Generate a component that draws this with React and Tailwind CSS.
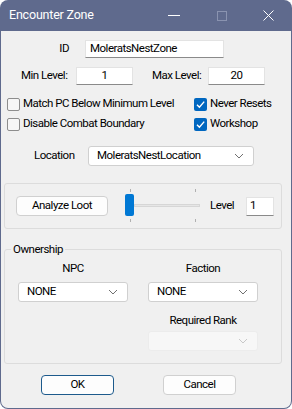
import React from 'react';

const font = { fontFamily: 'Roboto, "Liberation Sans", sans-serif' };

const Chevron = ({ color = '#606060' }) => (
    <svg width="10" height="6" viewBox="0 0 10 6" fill="none">
        <path d="M1 1 L5 5 L9 1" stroke={color} strokeWidth="1" />
    </svg>
);

const TextBox = ({ value, className = '' }) => (
    <div className={`h-[18px] bg-white border border-[#e3e3e3] border-b-[#8a8a8a] flex items-center ${className}`}>
        {value}
    </div>
);

const Combo = ({ value, disabled, className = '' }) => (
    <div
        className={`h-[20px] rounded-[3px] border flex items-center justify-between pl-[8px] pr-[9px] ${
            disabled ? 'bg-[#f7f7f7] border-[#ececec]' : 'bg-white border-[#d0d0d0]'
        } ${className}`}
    >
        <span>{value}</span>
        <Chevron color={disabled ? '#c8c8c8' : '#707070'} />
    </div>
);

const CheckBox = ({ checked, label }) => (
    <div className="flex items-center h-[14px] gap-[3px] whitespace-nowrap">
        {checked ? (
            <div className="w-[13px] h-[13px] rounded-[2px] bg-[#0067c0] flex items-center justify-center shrink-0">
                <svg width="11" height="11" viewBox="0 0 11 11" fill="none">
                    <path d="M2 5.8 L4.4 8.2 L9.2 2.6" stroke="white" strokeWidth="1.4" />
                </svg>
            </div>
        ) : (
            <div className="w-[13px] h-[13px] rounded-[2px] border border-[#8d8d8d] bg-[#f6f6f6] shrink-0" />
        )}
        <span>{label}</span>
    </div>
);

const Button = ({ children, primary, className = '' }) => (
    <div
        className={`h-[20px] rounded-[4px] flex items-center justify-center bg-[#fdfdfd] border ${
            primary ? 'border-[#1d5a8c]' : 'border-[#d0d0d0]'
        } ${className}`}
    >
        {children}
    </div>
);

const Slider = () => (
    <div className="relative ml-[13px] w-[84px] h-[34px] shrink-0">
        <div className="absolute left-[13px] top-[15px] w-[66px] h-[3px] bg-[#e6e6e6] border border-[#d6d6d6]" />
        <div className="absolute left-[9px] top-0 w-px h-[3px] bg-[#b0b0b0]" />
        <div className="absolute left-[74px] top-0 w-px h-[3px] bg-[#b0b0b0]" />
        <div className="absolute left-[9px] top-[30px] w-px h-[3px] bg-[#b0b0b0]" />
        <div className="absolute left-[74px] top-[30px] w-px h-[3px] bg-[#b0b0b0]" />
        <div className="absolute left-[4px] top-[5px] w-[9px] h-[22px] rounded-[2px] bg-[#0078d4]" />
    </div>
);

const App = () => {
    return (
        <div className="w-[292px] h-[409px] bg-white text-[11.5px] tracking-[-0.5px] text-black whitespace-nowrap" style={font}>
            <div className="w-[292px] h-[409px] rounded-[8px] overflow-hidden bg-[#5f6a8d] flex flex-col">
                {/* title bar */}
                <div className="h-[31px] flex items-center text-white shrink-0">
                    <span className="ml-[9px] text-[12.5px] tracking-[-0.2px]">Encounter Zone</span>
                    <div className="ml-auto flex items-center">
                        <div className="w-[12px] h-px bg-white mr-[37px]" />
                        <div className="w-[10px] h-[10px] border border-[#8a93b0] mr-[36px]" />
                        <svg width="11" height="11" viewBox="0 0 11 11" className="mr-[18px]">
                            <path d="M0.5 0.5 L10.5 10.5 M10.5 0.5 L0.5 10.5" stroke="white" strokeWidth="1" />
                        </svg>
                    </div>
                </div>

                {/* client */}
                <div className="flex-1 mx-px mb-px rounded-b-[7px] bg-[#f0f0f0] flex flex-col">
                    <div className="flex items-center mt-[9px] h-[18px]">
                        <span className="w-[68px] text-right">ID</span>
                        <TextBox value="MoleratsNestZone" className="ml-[16px] w-[139px] pl-[4px]" />
                    </div>

                    <div className="flex items-center mt-[9px] h-[18px]">
                        <span className="ml-[20px] w-[55px]">Min Level:</span>
                        <TextBox value="1" className="w-[57px] justify-center" />
                        <span className="ml-[19px] w-[56px]">Max Level:</span>
                        <TextBox value="20" className="w-[57px] justify-center" />
                    </div>

                    <div className="mt-[12px] ml-[6px] grid grid-cols-[187px_1fr] gap-y-[6px]">
                        <CheckBox label="Match PC Below Minimum Level" />
                        <CheckBox checked label="Never Resets" />
                        <CheckBox label="Disable Combat Boundary" />
                        <CheckBox checked label="Workshop" />
                    </div>

                    <div className="flex items-center mt-[15px]">
                        <span className="ml-[33px] w-[54px]">Location</span>
                        <Combo value="MoleratsNestLocation" className="w-[166px]" />
                    </div>

                    <div className="mt-[17px] mx-[3px] w-[278px] h-[46px] border border-[#dcdcdc] rounded-[3px] flex items-center">
                        <Button className="ml-[11px] w-[92px]">Analyze Loot</Button>
                        <Slider />
                        <span className="ml-[5px] w-[36px]">Level</span>
                        <TextBox value="1" className="w-[28px] h-[19px] pl-[3px]" />
                    </div>

                    <div className="relative mt-[20px] mx-[3px] w-[278px] h-[115px] border border-[#dcdcdc] rounded-[3px]">
                        <span className="absolute left-[6px] top-[-9px] px-[2px] bg-[#f0f0f0] leading-[16px]">Ownership</span>
                        <div className="flex mt-[10px]">
                            <div className="ml-[13px] w-[110px] flex flex-col items-center">
                                <span className="leading-[16px]">NPC</span>
                                <Combo value="NONE" className="mt-[6px] w-[110px]" />
                            </div>
                            <div className="ml-[20px] w-[110px] flex flex-col items-center">
                                <span className="leading-[16px]">Faction</span>
                                <Combo value="NONE" className="mt-[6px] w-[110px]" />
                                <span className="mt-[10px] leading-[16px]">Required Rank</span>
                                <Combo disabled value="" className="mt-[3px] w-[110px]" />
                            </div>
                        </div>
                    </div>

                    <div className="flex mt-[11px]">
                        <Button primary className="ml-[40px] w-[73px]">OK</Button>
                        <Button className="ml-[49px] w-[73px]">Cancel</Button>
                    </div>
                </div>
            </div>
        </div>
    );
};

export default App;
